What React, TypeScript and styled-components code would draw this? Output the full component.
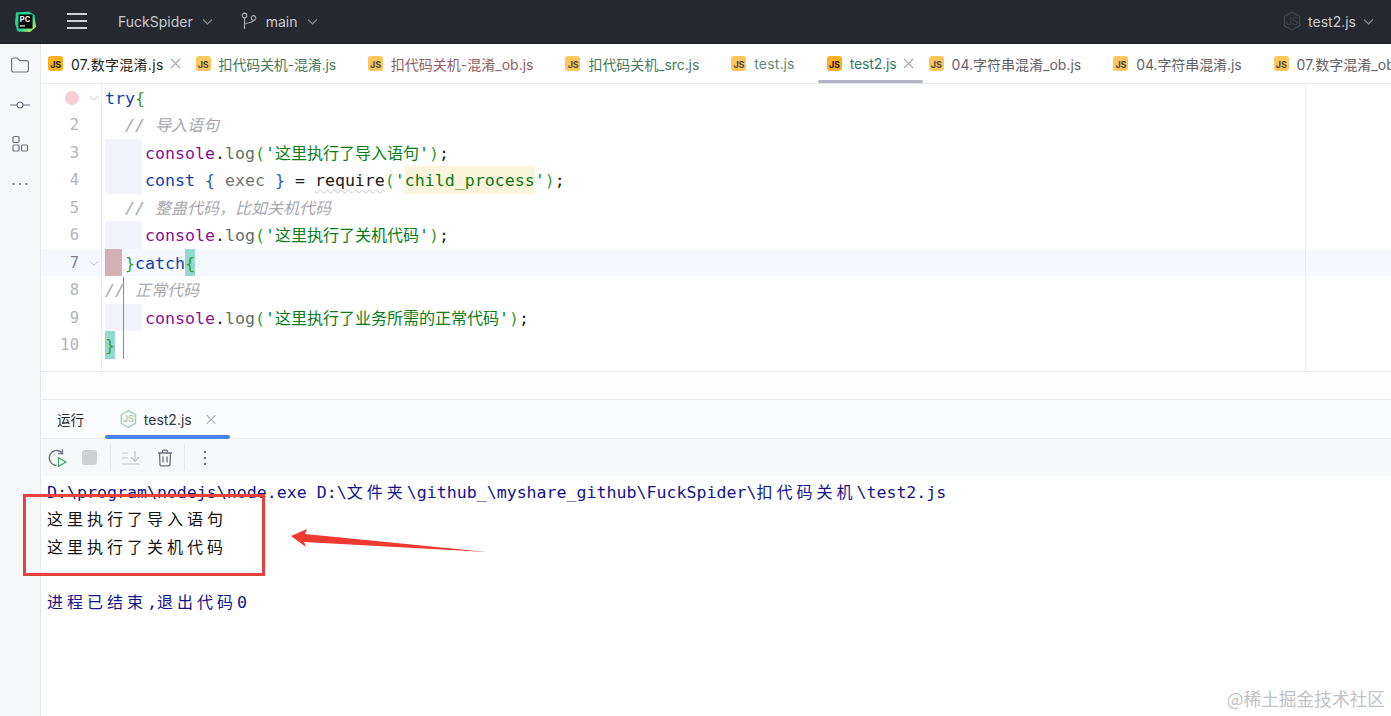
import React from "react";
import styled, { createGlobalStyle } from "styled-components";

const Global = createGlobalStyle`
  html, body { margin: 0; padding: 0; height: 100%; overflow: hidden; background: #fff; }
  #root { height: 100%; }
  * { box-sizing: border-box; }
`;

const UI = `Inter, "Noto Sans CJK SC", sans-serif`;
const MONO = `"DejaVu Sans Mono", "Noto Sans CJK SC", monospace`;

const Page = styled.div`
  position: relative;
  height: 100vh;
  display: flex;
  flex-direction: column;
  font-family: ${UI};
  overflow: hidden;
`;
const TitleBar = styled.header`
  height: 44px;
  flex: none;
  background: #26282f;
  border-bottom: 1px solid #1c1d22;
  display: flex;
  align-items: center;
  padding: 0 17px 1px 15px;
  color: #c9cbd0;
  font-size: 14px;
`;
const TitleGroup = styled.div<{ $ml?: number; $gap?: number }>`
  display: flex;
  align-items: center;
  margin-left: ${(p) => p.$ml ?? 0}px;
  gap: ${(p) => p.$gap ?? 9}px;
`;
const Grow = styled.div`
  flex: 1;
`;
const Body = styled.div`
  flex: 1;
  min-height: 0;
  display: flex;
`;
const Sidebar = styled.aside`
  width: 41px;
  flex: none;
  background: #f7f8fa;
  border-right: 1px solid #e6e8ec;
  display: flex;
  flex-direction: column;
  align-items: center;
  padding-top: 11px;
  gap: 19.5px;
`;
const Content = styled.main`
  flex: 1;
  min-width: 0;
  display: flex;
  flex-direction: column;
`;
const TabBar = styled.nav`
  height: 40px;
  flex: none;
  display: flex;
  align-items: stretch;
  border-bottom: 1px solid #e8e9ec;
  overflow: hidden;
`;
const Tab = styled.div<{ $active?: boolean }>`
  position: relative;
  flex: none;
  display: flex;
  align-items: center;
  padding: 0 8px 0 7px;
  font-size: 14px;
  white-space: nowrap;
  &::after {
    content: "";
    display: ${(p) => (p.$active ? "block" : "none")};
    position: absolute;
    left: -2px;
    right: -1px;
    bottom: 0;
    height: 3px;
    border-radius: 2px;
    background: #b0b3c2;
  }
`;
const JsIcon = styled.span<{ $strong?: boolean }>`
  width: 15px;
  height: 15px;
  flex: none;
  border-radius: 3px;
  background: ${(p) => (p.$strong ? "#fbb021" : "#fdc65e")};
  color: ${(p) => (p.$strong ? "#1c1c1c" : "#4d4a3c")};
  font: 700 9px/1 ${UI};
  display: flex;
  align-items: flex-end;
  justify-content: flex-end;
  padding: 0 2px 2px 0;
  margin-right: 8px;
  letter-spacing: -0.2px;
`;
const TabLabel = styled.span<{ $color: string; $ls: number }>`
  color: ${(p) => p.$color};
  letter-spacing: ${(p) => p.$ls}px;
`;
const CloseSlot = styled.span<{ $show?: boolean }>`
  width: 11px;
  height: 11px;
  margin-left: 6px;
  flex: none;
  visibility: ${(p) => (p.$show ? "visible" : "hidden")};
  display: flex;
`;

const Editor = styled.section`
  position: relative;
  height: 288px;
  flex: none;
  display: flex;
  border-bottom: 1px solid #e8e9ec;
  &::after {
    content: "";
    position: absolute;
    left: 1264px;
    top: 0;
    bottom: 0;
    width: 1px;
    background: #eceef1;
  }
`;
const Gutter = styled.div`
  width: 61px;
  flex: none;
  margin-top: -0.4px;
  border-right: 1px solid #ebecf0;
`;
const GutterRow = styled.div<{ $current?: boolean }>`
  height: 27.5px;
  padding-top: 2px;
  display: flex;
  align-items: center;
  background: ${(p) => (p.$current ? "#f5f8fe" : "transparent")};
`;
const LineNo = styled.span<{ $current?: boolean }>`
  width: 38px;
  font: 15.5px/1 ${MONO};
  color: ${(p) => (p.$current ? "#80838f" : "#b1b4bd")};
  display: flex;
  justify-content: flex-end;
`;
const Breakpoint = styled.span`
  width: 14px;
  height: 14px;
  border-radius: 50%;
  background: #f9ccd3;
`;
const FoldSlot = styled.span`
  width: 10px;
  margin-left: 10px;
  display: flex;
`;
const Code = styled.div`
  flex: 1;
  min-width: 0;
  margin-top: -0.4px;
  font-family: ${MONO};
  font-size: 16.6px;
  color: #1a1a1a;
`;
const Row = styled.div<{ $current?: boolean }>`
  height: 27.5px;
  line-height: 29.5px;
  padding-left: 3px;
  white-space: pre;
  background: ${(p) => (p.$current ? "#f5f8fe" : "transparent")};
`;
const Indent = styled.span`
  display: inline-block;
  vertical-align: top;
  width: 37px;
  height: 27.5px;
  margin-right: 3px;
  background: #f3f4fb;
`;
const Unindent = styled.span`
  width: 20px;
  display: inline-block;
`;
const ErrorMark = styled.span`
  display: inline-block;
  vertical-align: top;
  width: 17px;
  height: 27.5px;
  margin-right: 3px;
  background: #d2b0b3;
`;
const Kw = styled.span`
  color: #0f3fa8;
`;
const Obj = styled.span`
  color: #871094;
`;
const Fn = styled.span`
  color: #5d7067;
`;
const Br = styled.span<{ $match?: boolean }>`
  display: inline-block;
  vertical-align: top;
  height: 27.5px;
  color: #3f9a2c;
  background: ${(p) => (p.$match ? "#93d9d0" : "transparent")};
`;
const Str = styled.span<{ $warn?: boolean }>`
  display: inline-block;
  vertical-align: top;
  height: 27.5px;
  color: #067d17;
  background: ${(p) => (p.$warn ? "#fdf4dc" : "transparent")};
`;
const Han = styled.span`
  font-size: 16px;
`;
const Cmt = styled.span`
  color: #a6a8ad;
  font-style: italic;
`;
const Muted = styled.span`
  color: #737578;
`;
const CurlyBlue = styled.span`
  color: #1c63b8;
`;
const Wavy = styled.span`
  text-decoration: underline wavy #c9c9c9 1px;
  text-underline-offset: 3px;
`;
const BraceGuide = styled.div`
  position: absolute;
  left: 82px;
  top: 193px;
  height: 82px;
  width: 1px;
  background: #4fa8a0;
`;

const Strip = styled.div`
  height: 28px;
  flex: none;
  background: #fdfdfe;
  border-bottom: 1px solid #ebecf0;
`;
const RunTabs = styled.div`
  height: 39px;
  flex: none;
  display: flex;
  align-items: stretch;
  background: #fbfcfd;
  border-bottom: 1px solid #ebecf0;
  font-size: 14px;
  color: #34363b;
`;
const RunTitle = styled.div`
  margin-left: 16px;
  width: 48px;
  display: flex;
  align-items: center;
  font-size: 13.5px;
  color: #27282c;
`;
const RunTab = styled.div`
  position: relative;
  display: flex;
  align-items: center;
  padding: 0 14px 0 15px;
  width: 125px;
  &::after {
    content: "";
    position: absolute;
    left: 0;
    right: 0;
    bottom: -1px;
    height: 4px;
    border-radius: 2px;
    background: #4b82e6;
  }
`;
const RunLabel = styled.span`
  margin-left: 7px;
  margin-right: 14px;
`;
const Toolbar = styled.div`
  height: 37px;
  flex: none;
  background: #f7f8fa;
  display: flex;
  align-items: center;
  padding-left: 5px;
`;
const ToolSlot = styled.span<{ $w: number; $mr?: number }>`
  width: ${(p) => p.$w}px;
  margin-right: ${(p) => p.$mr ?? 0}px;
  display: flex;
  align-items: center;
  justify-content: center;
  flex: none;
`;
const Stop = styled.span`
  width: 15px;
  height: 15px;
  border-radius: 3px;
  background: #cfd0d2;
`;
const Sep = styled.span`
  width: 1px;
  height: 27px;
  background: #e9eaed;
  flex: none;
`;
const Output = styled.div`
  flex: 1;
  padding: 2.5px 0 0 6px;
  font-family: ${MONO};
  font-size: 16.6px;
  background: #fff;
`;
const OutLine = styled.div<{ $navy?: boolean }>`
  height: 27.5px;
  line-height: 27.5px;
  white-space: pre;
  color: ${(p) => (p.$navy ? "#14148a" : "#111")};
`;
const Wide = styled.span`
  font-size: 16px;
  letter-spacing: 4px;
  display: inline-block;
`;
const RedBox = styled.div`
  position: absolute;
  left: 23px;
  top: 494px;
  width: 242px;
  height: 82px;
  border: 3px solid #e9413e;
  pointer-events: none;
`;
const ArrowSvg = styled.svg`
  position: absolute;
  left: 288px;
  top: 524px;
`;
const Watermark = styled.div`
  position: absolute;
  right: 6px;
  bottom: 6px;
  font-size: 17.7px;
  line-height: 24px;
  color: #c2c2c2;
  font-family: "Noto Sans CJK SC", sans-serif;
  font-weight: 400;
`;

const Chevron = ({ color = "#8a8d94", size = 11 }: { color?: string; size?: number }) => (
  <svg width={size} height={size} viewBox="0 0 11 11" fill="none">
    <path d="M1 3.500l4.500 4.500L10 3.500" stroke={color} strokeWidth="1.100" />
  </svg>
);
const Cross = ({ color = "#a3a6ad" }: { color?: string }) => (
  <svg width="11" height="11" viewBox="0 0 11 11" fill="none">
    <path d="M1 1l9 9M10 1l-9 9" stroke={color} strokeWidth="1.100" />
  </svg>
);
const NodeIcon = ({ stroke, fill, w = 1.2 }: { stroke: string; fill: string; w?: number }) => (
  <svg width="18" height="20" viewBox="0 0 18 20" fill="none">
    <path d="M9 1l7.600 4.400v9.200L9 19l-7.600-4.400V5.400z" stroke={stroke} strokeWidth={w} fill="none" />
    <text x="9" y="13.500" textAnchor="middle" fontFamily="Inter, sans-serif" fontSize="10" fill={fill}>
      JS
    </text>
  </svg>
);
const PyLogo = () => (
  <svg width="21" height="21" viewBox="0 0 21 21">
    <defs>
      <linearGradient id="pcg" x1="0" y1="0" x2="1" y2="1">
        <stop offset="0" stopColor="#21d789" />
        <stop offset="0.55" stopColor="#1fcf9a" />
        <stop offset="1" stopColor="#f5f24a" />
      </linearGradient>
    </defs>
    <path d="M1 1.500L14 .5l5.500 3.500L21 16l-6 5L2.500 20.500 0 12z" fill="url(#pcg)" />
    <rect x="3.500" y="3.500" width="14" height="14" fill="#000" />
    <text x="4.800" y="10.500" fontFamily="Inter, sans-serif" fontWeight="700" fontSize="7.500" fill="#fff">
      PC
    </text>
    <rect x="5" y="14.300" width="5" height="1.200" fill="#fff" />
  </svg>
);
const Hamburger = () => (
  <svg width="20" height="20" viewBox="0 0 20 20">
    <path d="M0 3h20M0 10h20M0 17h20" stroke="#cfd1d5" strokeWidth="2" />
  </svg>
);
const BranchIcon = () => (
  <svg width="16" height="18" viewBox="0 0 16 18" fill="none" stroke="#a6a9b0" strokeWidth="1.200">
    <circle cx="3.500" cy="3.500" r="2.300" />
    <circle cx="12.500" cy="6" r="2.300" />
    <path d="M3.500 6v11M3.500 13c0-3 9-1.500 9-4.700" />
  </svg>
);
const FolderIcon = () => (
  <svg width="20" height="20" viewBox="0 0 20 20" fill="none" stroke="#6c707e" strokeWidth="1.200">
    <path d="M1.600 5c0-1.200.8-2 2-2h3.800l2.300 2.600h7c1.100 0 1.700.7 1.700 1.700v8c0 1.100-.7 1.700-1.700 1.700H3.300c-1 0-1.700-.7-1.700-1.700z" />
  </svg>
);
const CommitIcon = () => (
  <svg width="20" height="20" viewBox="0 0 20 20" fill="none" stroke="#6c707e" strokeWidth="1.200">
    <circle cx="10" cy="10" r="3" />
    <path d="M0 10h7M13 10h7" />
  </svg>
);
const StructureIcon = () => (
  <svg width="20" height="20" viewBox="0 0 20 20" fill="none" stroke="#6c707e" strokeWidth="1.200">
    <rect x="3" y="2.500" width="6" height="6" rx="1.200" />
    <rect x="3" y="11" width="6" height="6" rx="1.200" />
    <rect x="11.500" y="11" width="6" height="6" rx="1.200" />
  </svg>
);
const DotsIcon = () => (
  <svg width="20" height="20" viewBox="0 0 20 20" fill="#6c707e">
    <circle cx="3.500" cy="10" r="1.100" />
    <circle cx="10" cy="10" r="1.100" />
    <circle cx="16.500" cy="10" r="1.100" />
  </svg>
);
const RerunIcon = () => (
  <svg width="20" height="20" viewBox="0 0 20 20" fill="none">
    <path d="M9.500 17.500A7.500 7.500 0 1 1 15 4.600" stroke="#6c707e" strokeWidth="1.300" />
    <path d="M15.500 1.200v4.300h-4.300" stroke="#6c707e" strokeWidth="1.300" />
    <path d="M11.500 9.700l7.500 4.300-7.500 4.400z" stroke="#3fa66a" strokeWidth="1.300" strokeLinejoin="round" />
  </svg>
);
const ScrollIcon = () => (
  <svg width="20" height="16" viewBox="0 0 20 16" fill="none" stroke="#c4c6cb" strokeWidth="1.200">
    <path d="M1 3h6M1 8h6M1 14h18M14 1v10M10 7l4 4.500L18 7" />
  </svg>
);
const TrashIcon = () => (
  <svg width="16" height="18" viewBox="0 0 16 18" fill="none" stroke="#6c707e" strokeWidth="1.300">
    <path d="M1 4h14M5.500 4V2.200c0-.6.4-1 1-1h3c.6 0 1 .4 1 1V4M2.500 4l.5 11.500c0 .8.5 1.300 1.200 1.300h7.600c.7 0 1.200-.5 1.200-1.300L13.500 4M6 7.500v6M10 7.500v6" />
  </svg>
);
const KebabIcon = () => (
  <svg width="4" height="16" viewBox="0 0 4 16" fill="#6c707e">
    <circle cx="2" cy="2" r="1.200" />
    <circle cx="2" cy="8" r="1.200" />
    <circle cx="2" cy="14" r="1.200" />
  </svg>
);

const tabs = [
  { label: "07.数字混淆.js", color: "#1e1f22", close: true, strong: true, ls: 0.3 },
  { label: "扣代码关机-混淆.js", color: "#4c7a58", ls: -0.18 },
  { label: "扣代码关机-混淆_ob.js", color: "#8f5f63", ls: 0 },
  { label: "扣代码关机_src.js", color: "#4c7a58", ls: -0.07 },
  { label: "test.js", color: "#5f8b78", ls: 0.14 },
  { label: "test2.js", color: "#2f7a5f", close: true, active: true, strong: true, ls: -0.12 },
  { label: "04.字符串混淆_ob.js", color: "#5f6269", ls: 0 },
  { label: "04.字符串混淆.js", color: "#5f6269", ls: -0.08 },
  { label: "07.数字混淆_ob.js", color: "#5f6269", ls: 0 },
];

const Log = ({ text }: { text: string }) => (
  <>
    <Indent />
    <Obj>console</Obj>.<Fn>log</Fn>
    <Br>(</Br>
    <Str>
      '<Han>{text}</Han>'
    </Str>
    <Br>)</Br>;
  </>
);

export default function App() {
  return (
    <Page>
      <Global />
      <TitleBar>
        <PyLogo />
        <TitleGroup $ml={31}>
          <Hamburger />
        </TitleGroup>
        <TitleGroup $ml={31}>
          FuckSpider
          <Chevron />
        </TitleGroup>
        <TitleGroup $ml={28}>
          <BranchIcon />
          main
          <Chevron />
        </TitleGroup>
        <Grow />
        <TitleGroup $gap={7}>
          <NodeIcon stroke="#3d4a45" fill="#3d4a45" />
          test2.js
          <Chevron />
        </TitleGroup>
      </TitleBar>
      <Body>
        <Sidebar>
          <FolderIcon />
          <CommitIcon />
          <StructureIcon />
          <DotsIcon />
        </Sidebar>
        <Content>
          <TabBar>
            {tabs.map((t) => (
              <Tab key={t.label} $active={t.active}>
                <JsIcon $strong={t.strong}>JS</JsIcon>
                <TabLabel $color={t.color} $ls={t.ls}>
                  {t.label}
                </TabLabel>
                <CloseSlot $show={t.close}>
                  <Cross />
                </CloseSlot>
              </Tab>
            ))}
          </TabBar>
          <Editor>
            <Gutter>
              {[1, 2, 3, 4, 5, 6, 7, 8, 9, 10].map((n) => (
                <GutterRow key={n} $current={n === 7}>
                  <LineNo $current={n === 7}>{n === 1 ? <Breakpoint /> : n}</LineNo>
                  {(n === 1 || n === 7) && (
                    <FoldSlot>
                      <Chevron color="#c4c6cc" size={10} />
                    </FoldSlot>
                  )}
                </GutterRow>
              ))}
            </Gutter>
            <Code>
              <Row>
                <Kw>try</Kw>
                <Br>{"{"}</Br>
              </Row>
              <Row>
                <Unindent />
                <Cmt>
                  // <Han>导入语句</Han>
                </Cmt>
              </Row>
              <Row>
                <Log text="这里执行了导入语句" />
              </Row>
              <Row>
                <Indent />
                <Kw>const</Kw> <CurlyBlue>{"{"}</CurlyBlue> <Muted>exec</Muted> <CurlyBlue>{"}"}</CurlyBlue> ={" "}
                <Wavy>require</Wavy>
                <Br>(</Br>
                <Str>'</Str>
                <Str $warn>child_process</Str>
                <Str>'</Str>
                <Br>)</Br>;
              </Row>
              <Row>
                <Unindent />
                <Cmt>
                  // <Han>整蛊代码，比如关机代码</Han>
                </Cmt>
              </Row>
              <Row>
                <Log text="这里执行了关机代码" />
              </Row>
              <Row $current>
                <ErrorMark />
                <Br>{"}"}</Br>
                <Kw>catch</Kw>
                <Br $match>{"{"}</Br>
              </Row>
              <Row>
                <Cmt>
                  // <Han>正常代码</Han>
                </Cmt>
              </Row>
              <Row>
                <Log text="这里执行了业务所需的正常代码" />
              </Row>
              <Row>
                <Br $match>{"}"}</Br>
              </Row>
            </Code>
            <BraceGuide />
          </Editor>
          <Strip />
          <RunTabs>
            <RunTitle>运行</RunTitle>
            <RunTab>
              <NodeIcon stroke="#a9cfb9" fill="#8dbba2" w={1.5} />
              <RunLabel>test2.js</RunLabel>
              <Cross />
            </RunTab>
          </RunTabs>
          <Toolbar>
            <ToolSlot $w={22}>
              <RerunIcon />
            </ToolSlot>
            <ToolSlot $w={42}>
              <Stop />
            </ToolSlot>
            <ToolSlot $w={0}>
              <Sep />
            </ToolSlot>
            <ToolSlot $w={41}>
              <ScrollIcon />
            </ToolSlot>
            <ToolSlot $w={27} $mr={6}>
              <TrashIcon />
            </ToolSlot>
            <ToolSlot $w={0}>
              <Sep />
            </ToolSlot>
            <ToolSlot $w={42}>
              <KebabIcon />
            </ToolSlot>
          </Toolbar>
          <Output>
            <OutLine $navy>
              D:\program\nodejs\node.exe D:\<Wide>文件夹</Wide>\github_\myshare_github\FuckSpider\<Wide>扣代码关机</Wide>
              \test2.js
            </OutLine>
            <OutLine>
              <Wide>这里执行了导入语句</Wide>
            </OutLine>
            <OutLine>
              <Wide>这里执行了关机代码</Wide>
            </OutLine>
            <OutLine> </OutLine>
            <OutLine $navy>
              <Wide>进程已结束</Wide>,<Wide>退出代码</Wide>0
            </OutLine>
          </Output>
        </Content>
      </Body>
      <RedBox />
      <ArrowSvg width="202" height="32" viewBox="0 0 202 32">
        <path d="M3 12L19 5l-2 5L199 28 16 18l2 5z" fill="#ee3a30" />
      </ArrowSvg>
      <Watermark>@稀土掘金技术社区</Watermark>
    </Page>
  );
}
